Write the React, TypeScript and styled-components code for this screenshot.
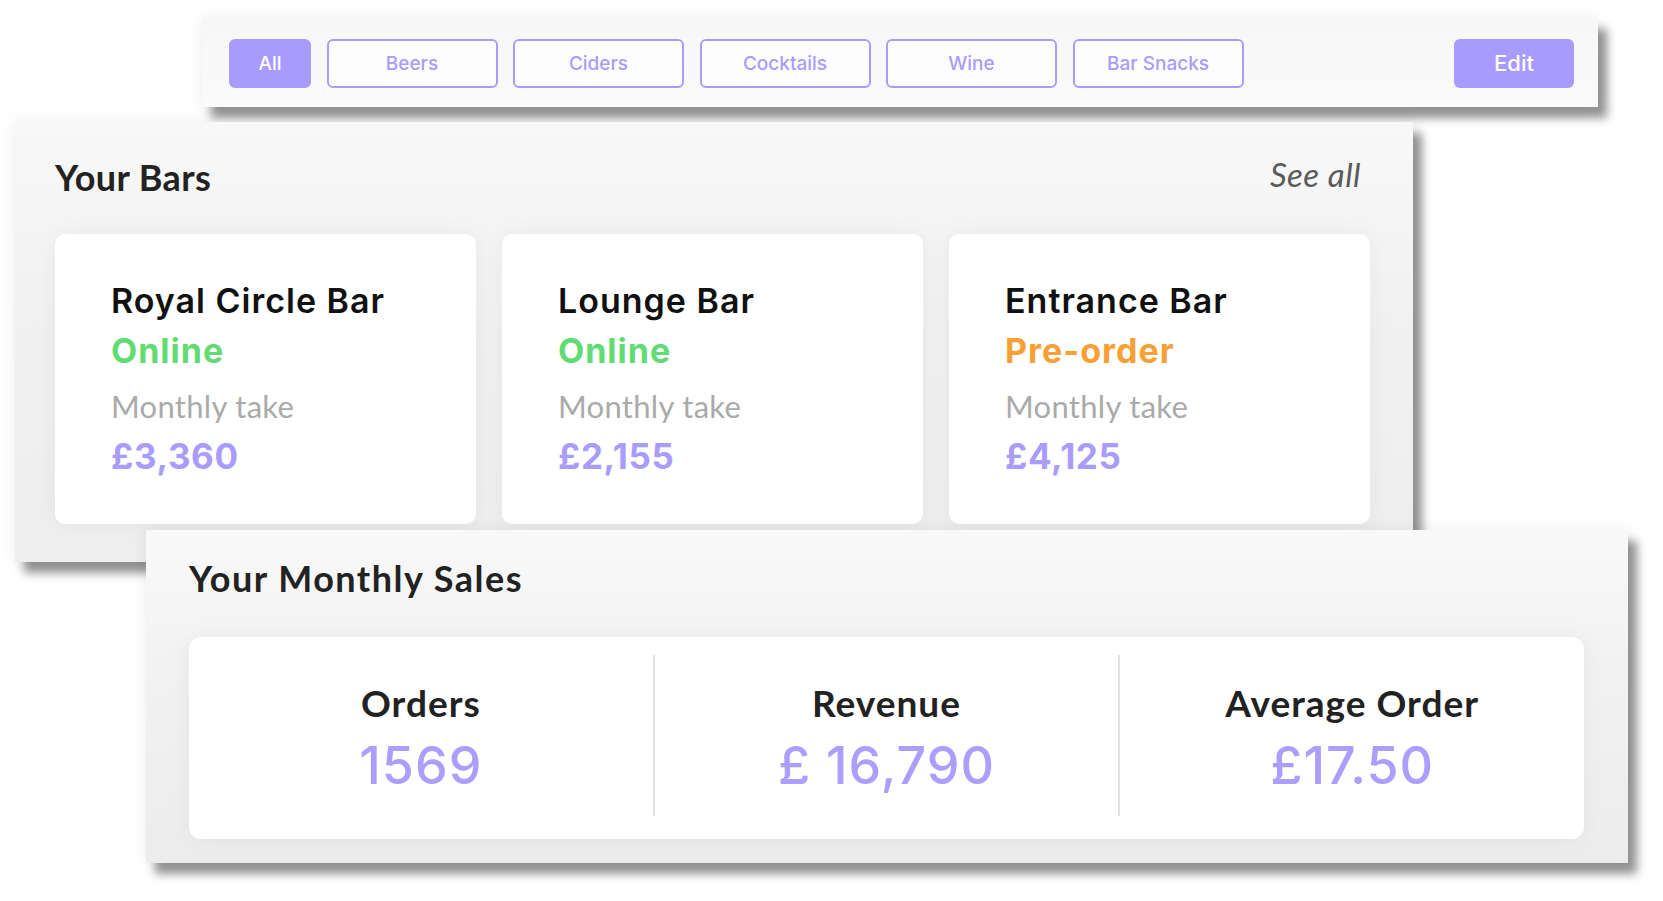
import React from "react";
import styled, { createGlobalStyle } from "styled-components";

const GlobalStyle = createGlobalStyle`
  html, body {
    margin: 0;
    padding: 0;
    background: #ffffff;
  }
  body {
    font-family: "Inter", "Liberation Sans", sans-serif;
    -webkit-font-smoothing: antialiased;
  }
  * { box-sizing: border-box; }
`;

const Stage = styled.div`
  width: 1663px;
  height: 901px;
  overflow: hidden;
  display: flex;
  flex-direction: column;
  align-items: flex-start;
  padding-top: 18px;
  background: #ffffff;
`;

const panelShadow = `
  box-shadow: 9px 11px 9px rgba(0, 0, 0, 0.42), 0 0 16px rgba(0, 0, 0, 0.07);
`;

const Toolbar = styled.div`
  position: relative;
  margin-left: 202px;
  width: 1396px;
  height: 89px;
  display: flex;
  align-items: center;
  gap: 15.5px;
  padding: 1px 24px 0 27px;
  background: linear-gradient(180deg, #f7f7f7 0%, #fafafa 100%);
  ${panelShadow}
`;

const FilterButton = styled.button<{ $active?: boolean; $width: number }>`
  width: ${(p) => p.$width}px;
  height: 49px;
  border-radius: 6px;
  border: 2px solid #a99cff;
  background: ${(p) => (p.$active ? "#a89bfd" : "#fdfdfd")};
  color: ${(p) => (p.$active ? "#ffffff" : "#a99cfc")};
  font-family: "Inter", "Liberation Sans", sans-serif;
  font-size: 19px;
  font-weight: 500;
  padding: 0;
  cursor: pointer;
`;

const EditButton = styled.button`
  margin-left: auto;
  width: 120px;
  height: 49px;
  border-radius: 6px;
  border: none;
  background: #a89bfd;
  color: #ffffff;
  font-family: "Inter", "Liberation Sans", sans-serif;
  font-size: 22px;
  font-weight: 500;
  cursor: pointer;
`;

const BarsPanel = styled.section`
  position: relative;
  margin-top: 15px;
  margin-left: 15px;
  width: 1398px;
  height: 440px;
  padding: 31px 43px 0 40px;
  background: linear-gradient(180deg, #f8f8f8 0%, #f1f1f1 45%, #eeeeee 100%);
  ${panelShadow}
`;

const SectionHeader = styled.div`
  display: flex;
  justify-content: space-between;
  align-items: flex-start;
  padding-right: 9px;
  margin-bottom: 33px;
`;

const SectionTitle = styled.h2<{ $spacing: number }>`
  margin: 0;
  font-family: "Lato", "Liberation Sans", sans-serif;
  font-weight: 700;
  font-size: 36px;
  line-height: 48px;
  letter-spacing: ${(p) => p.$spacing}px;
  color: #222222;
`;

const SeeAll = styled.a`
  font-family: "Lato", "Liberation Sans", sans-serif;
  font-style: italic;
  font-size: 33px;
  line-height: 42px;
  color: #5a5a5a;
  letter-spacing: 0.5px;
  text-decoration: none;
`;

const CardGrid = styled.div`
  display: grid;
  grid-template-columns: repeat(3, 1fr);
  gap: 26px;
`;

const BarCard = styled.div`
  height: 290px;
  background: #ffffff;
  border-radius: 10px;
  padding: 42px 24px 0 56px;
  box-shadow: 0 0 22px rgba(0, 0, 0, 0.05);
  display: flex;
  flex-direction: column;
`;

const BarName = styled.div`
  font-family: "Inter", "Liberation Sans", sans-serif;
  font-weight: 600;
  font-size: 34px;
  line-height: 50px;
  letter-spacing: 1px;
  color: #111111;
`;

const BarStatus = styled.div<{ $color: string }>`
  font-family: "Inter", "Liberation Sans", sans-serif;
  font-weight: 700;
  font-size: 34px;
  line-height: 50px;
  letter-spacing: 1px;
  color: ${(p) => p.$color};
`;

const TakeLabel = styled.div`
  margin-top: 5px;
  font-family: "Lato", "Liberation Sans", sans-serif;
  font-weight: 400;
  font-size: 31px;
  line-height: 50px;
  letter-spacing: 0.3px;
  color: #aaaaaa;
`;

const TakeValue = styled.div`
  font-family: "Inter", "Liberation Sans", sans-serif;
  font-weight: 700;
  font-size: 35px;
  line-height: 50px;
  letter-spacing: 0.6px;
  color: #a99cfc;
`;

const SalesPanel = styled.section`
  position: relative;
  margin-top: -32px;
  margin-left: 146px;
  width: 1482px;
  height: 333px;
  padding: 24px 44px 0 43px;
  background: linear-gradient(180deg, #f9f9f9 0%, #f2f2f2 40%, #ececec 100%);
  ${panelShadow}
`;

const SalesTitleRow = styled.div`
  margin-bottom: 35px;
`;

const StatsCard = styled.div`
  height: 202px;
  background: #ffffff;
  border-radius: 12px;
  box-shadow: 0 0 22px rgba(0, 0, 0, 0.05);
  display: grid;
  grid-template-columns: 1fr 2px 1fr 2px 1fr;
`;

const StatColumn = styled.div`
  display: flex;
  flex-direction: column;
  align-items: center;
  padding-top: 41px;
`;

const StatLabel = styled.div`
  font-family: "Lato", "Liberation Sans", sans-serif;
  font-weight: 700;
  font-size: 37px;
  line-height: 50px;
  letter-spacing: 1px;
  color: #222222;
`;

const StatValue = styled.div`
  margin-top: 5px;
  font-family: "Inter", "Liberation Sans", sans-serif;
  font-weight: 500;
  font-size: 52px;
  line-height: 66px;
  letter-spacing: 1px;
  color: #ae9dfc;
`;

const Divider = styled.div`
  margin: 18px 0 23px;
  background: #e2e2e2;
`;

const filters = [
  { label: "All", width: 82, active: true },
  { label: "Beers", width: 171 },
  { label: "Ciders", width: 171 },
  { label: "Cocktails", width: 171 },
  { label: "Wine", width: 171 },
  { label: "Bar Snacks", width: 171 },
];

const bars = [
  { name: "Royal Circle Bar", status: "Online", color: "#60dc73", take: "£3,360" },
  { name: "Lounge Bar", status: "Online", color: "#60dc73", take: "£2,155" },
  { name: "Entrance Bar", status: "Pre-order", color: "#f8a034", take: "£4,125" },
];

const stats = [
  { label: "Orders", value: "1569" },
  { label: "Revenue", value: "£ 16,790" },
  { label: "Average Order", value: "£17.50" },
];

export default function App() {
  return (
    <>
      <GlobalStyle />
      <Stage>
        <Toolbar>
          {filters.map((f) => (
            <FilterButton key={f.label} $active={f.active} $width={f.width}>
              {f.label}
            </FilterButton>
          ))}
          <EditButton>Edit</EditButton>
        </Toolbar>

        <BarsPanel>
          <SectionHeader>
            <SectionTitle $spacing={0.4}>Your Bars</SectionTitle>
            <SeeAll>See all</SeeAll>
          </SectionHeader>
          <CardGrid>
            {bars.map((b) => (
              <BarCard key={b.name}>
                <BarName>{b.name}</BarName>
                <BarStatus $color={b.color}>{b.status}</BarStatus>
                <TakeLabel>Monthly take</TakeLabel>
                <TakeValue>{b.take}</TakeValue>
              </BarCard>
            ))}
          </CardGrid>
        </BarsPanel>

        <SalesPanel>
          <SalesTitleRow>
            <SectionTitle $spacing={1.5}>Your Monthly Sales</SectionTitle>
          </SalesTitleRow>
          <StatsCard>
            {stats.map((s, i) => (
              <React.Fragment key={s.label}>
                {i > 0 && <Divider />}
                <StatColumn>
                  <StatLabel>{s.label}</StatLabel>
                  <StatValue>{s.value}</StatValue>
                </StatColumn>
              </React.Fragment>
            ))}
          </StatsCard>
        </SalesPanel>
      </Stage>
    </>
  );
}
